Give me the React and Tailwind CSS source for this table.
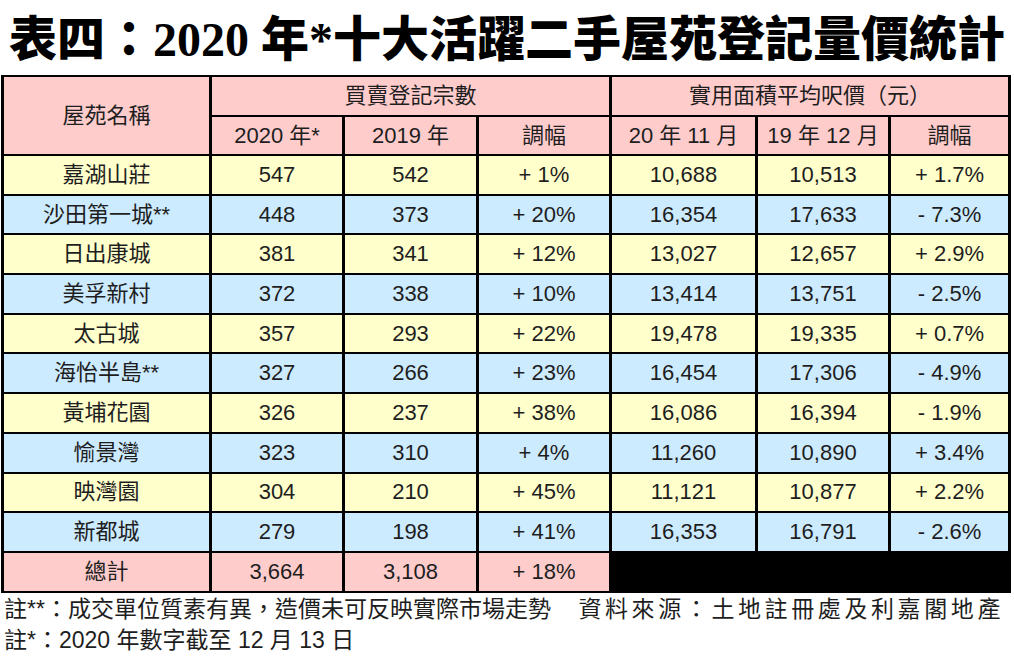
import React from 'react';

const rows = [
  ['嘉湖山莊', '547', '542', '+ 1%', '10,688', '10,513', '+ 1.7%'],
  ['沙田第一城**', '448', '373', '+ 20%', '16,354', '17,633', '- 7.3%'],
  ['日出康城', '381', '341', '+ 12%', '13,027', '12,657', '+ 2.9%'],
  ['美孚新村', '372', '338', '+ 10%', '13,414', '13,751', '- 2.5%'],
  ['太古城', '357', '293', '+ 22%', '19,478', '19,335', '+ 0.7%'],
  ['海怡半島**', '327', '266', '+ 23%', '16,454', '17,306', '- 4.9%'],
  ['黃埔花園', '326', '237', '+ 38%', '16,086', '16,394', '- 1.9%'],
  ['愉景灣', '323', '310', '+ 4%', '11,260', '10,890', '+ 3.4%'],
  ['映灣園', '304', '210', '+ 45%', '11,121', '10,877', '+ 2.2%'],
  ['新都城', '279', '198', '+ 41%', '16,353', '16,791', '- 2.6%'],
];

const body = "font-['Liberation_Sans','Noto_Sans_CJK_TC',sans-serif]";

function Cell({ className = '', children }) {
  return (
    <div className={`flex items-center justify-center text-[22px] leading-none text-[#1e1e1e] ${className}`}>
      {children}
    </div>
  );
}

export default function App() {
  return (
    <div className={`w-[1014px] h-[667px] bg-white ${body}`}>
      {/* title */}
      <div className="h-[75px] flex items-center pl-[9px] pt-[4px]">
        <h1 className="text-[48px] font-black leading-none text-black font-['Liberation_Serif','Noto_Sans_CJK_TC',serif] whitespace-nowrap">
          表四：2020 年*十大活躍二手屋苑登記量價統計
        </h1>
      </div>

      {/* table */}
      <div className="ml-[1px] w-[1010px] grid grid-cols-[205px_130px_131px_130px_143px_130px_117px] grid-rows-[38px_37px_repeat(10,37.7px)_38px] gap-x-[3px] gap-y-[2px] px-[3px] py-[2px] bg-black">
        <Cell className="row-span-2 bg-[#ffcccc]">屋苑名稱</Cell>
        <Cell className="col-span-3 bg-[#ffcccc]">買賣登記宗數</Cell>
        <Cell className="col-span-3 bg-[#ffcccc]">實用面積平均呎價（元）</Cell>
        <Cell className="bg-[#ffcccc]">2020 年*</Cell>
        <Cell className="bg-[#ffcccc]">2019 年</Cell>
        <Cell className="bg-[#ffcccc]">調幅</Cell>
        <Cell className="bg-[#ffcccc]">20 年 11 月</Cell>
        <Cell className="bg-[#ffcccc]">19 年 12 月</Cell>
        <Cell className="bg-[#ffcccc]">調幅</Cell>

        {rows.map((r, i) =>
          r.map((v, j) => (
            <Cell key={`${i}-${j}`} className={i % 2 === 0 ? 'bg-[#ffffcc]' : 'bg-[#cdebff]'}>
              {v}
            </Cell>
          ))
        )}

        <Cell className="bg-[#ffcccc]">總計</Cell>
        <Cell className="bg-[#ffcccc]">3,664</Cell>
        <Cell className="bg-[#ffcccc]">3,108</Cell>
        <Cell className="bg-[#ffcccc]">+ 18%</Cell>
        <div className="col-span-3 bg-black" />
      </div>

      {/* notes */}
      <div className="pl-[4px] pr-[10px] text-[23px] leading-[31px] text-[#1e1e1e] mt-[1px]">
        <div className="flex justify-between">
          <span>註**：成交單位質素有異，造價未可反映實際市場走勢</span>
          <span className="tracking-[3.6px]">資料來源：土地註冊處及利嘉閣地產</span>
        </div>
        <div>註*：2020 年數字截至 12 月 13 日</div>
      </div>
    </div>
  );
}
